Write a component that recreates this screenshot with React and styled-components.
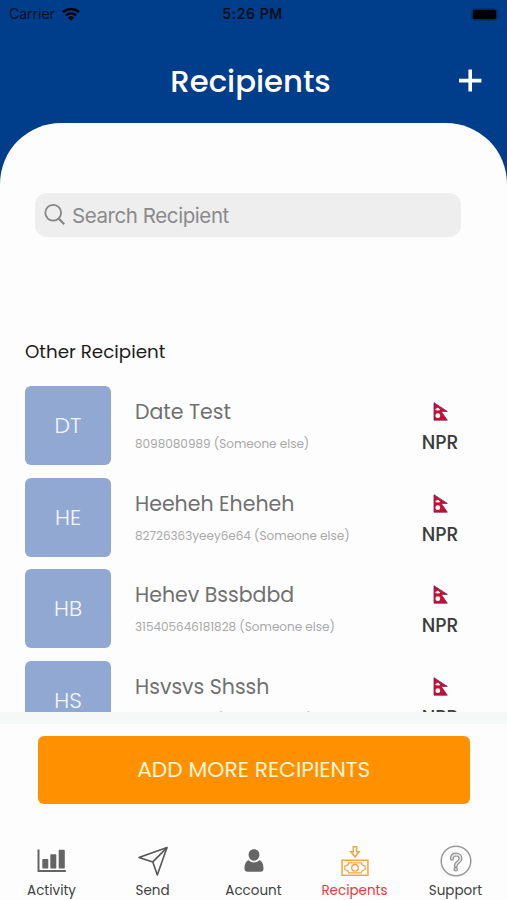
import React from 'react';
import styled, { createGlobalStyle } from 'styled-components';

const GlobalStyle = createGlobalStyle`
  *, *::before, *::after { box-sizing: border-box; }
  body { margin: 0; background: #fdfdfd; font-family: Poppins, Inter, sans-serif; }
  button, input { font: inherit; border: 0; padding: 0; margin: 0; background: none; }
  svg { display: block; flex: none; }
`;

const Screen = styled.div`
  width: 507px;
  height: 900px;
  display: flex;
  flex-direction: column;
  overflow: hidden;
  background: #003d8b;
`;

const StatusBar = styled.div`
  flex: none;
  height: 27px;
  padding: 0 11px 0 9px;
  display: grid;
  grid-template-columns: 1fr auto 1fr;
  align-items: center;
  color: #06101f;
  font-family: Inter, sans-serif;
  font-size: 14px;
  line-height: 28px;
`;

const Carrier = styled.div`
  display: flex;
  align-items: center;
  gap: 7px;
`;

const Clock = styled.div`
  font-weight: 600;
  letter-spacing: 0.6px;
`;

const Battery = styled.div`
  justify-self: end;
  width: 23px;
  height: 9px;
  border-radius: 2px;
  background: #000;
  box-shadow: 0 0 0 1.5px #02295f;
`;

const Header = styled.header`
  flex: none;
  height: 96px;
  padding: 0 25px 0 19px;
  display: grid;
  grid-template-columns: 24px 1fr 24px;
  align-items: start;
`;

const Title = styled.h1`
  margin: 34px 0 0;
  text-align: center;
  color: #fff;
  font-size: 30.7px;
  font-weight: 500;
  line-height: 41px;
`;

const AddButton = styled.button`
  margin-top: 42px;
  color: #fff;
`;

const Panel = styled.main`
  flex: 1;
  min-height: 0;
  display: flex;
  flex-direction: column;
  border-radius: 61px 61px 0 0;
  background: #fdfdfd;
`;

const SearchField = styled.label`
  flex: none;
  height: 44px;
  margin: 70px 46px 0 35px;
  padding-left: 9px;
  display: flex;
  align-items: center;
  gap: 6px;
  border-radius: 12px;
  background: #eeeeee;
  color: #8a8a8c;
`;

const SearchInput = styled.input`
  flex: 1;
  height: 44px;
  outline: none;
  font-family: Inter, sans-serif;
  font-size: 20.5px;
  letter-spacing: -0.42px;
  &::placeholder { color: #8a8a8c; opacity: 1; }
`;

const SectionTitle = styled.h2`
  flex: none;
  margin: 102px 0 0 25px;
  color: #1c1c1c;
  font-size: 18.3px;
  font-weight: 400;
  line-height: 26px;
`;

const List = styled.ul`
  flex: none;
  height: 326px;
  margin: 21px 0 0;
  padding: 0 0 0 25px;
  list-style: none;
  overflow: hidden;
`;

const Row = styled.li`
  height: 79px;
  margin-bottom: 12.6px;
  display: flex;
`;

const Avatar = styled.div`
  flex: none;
  width: 86px;
  height: 79px;
  border-radius: 6px;
  background: #91a8d3;
  color: #f4f7fd;
  text-align: center;
  font-size: 22px;
  font-weight: 300;
  line-height: 80px;
`;

const Details = styled.div`
  flex: 1;
  padding: 12px 0 0 24px;
`;

const Name = styled.div`
  color: #707070;
  font-size: 20.5px;
  font-weight: 400;
  line-height: 28px;
`;

const Reference = styled.div`
  margin-top: 8px;
  color: #a9a9a9;
  font-size: 12px;
  line-height: 20px;
`;

const Currency = styled.div`
  flex: none;
  width: 40px;
  margin-right: 47px;
  padding-top: 16px;
  display: flex;
  flex-direction: column;
  align-items: center;
  color: #3c3c3c;
  font-size: 18.8px;
  font-weight: 500;
  line-height: 20px;
`;

const FlagSlot = styled.div`
  height: 31px;
  padding-left: 2px;
`;

const Divider = styled.div`
  flex: none;
  height: 12px;
  background: #f6f7f7;
`;

const PrimaryButton = styled.button`
  flex: none;
  height: 68px;
  margin: 12px 37px 0 37.5px;
  border-radius: 6px;
  background: #ff9000;
  color: #fff4d6;
  text-align: center;
  font-size: 21.8px;
  font-weight: 400;
  line-height: 68px;
`;

const TabBar = styled.nav`
  flex: 1;
  display: grid;
  grid-template-columns: repeat(5, 101px);
  padding: 41px 0 0 1px;
`;

const Tab = styled.a`
  display: flex;
  flex-direction: column;
  align-items: center;
  color: ${(p) => (p.$active ? '#e23b3b' : '#414141')};
  font-size: 13.5px;
  line-height: 20px;
`;

const TabIcon = styled.span`
  height: 36px;
`;

const WifiIcon = () => (
  <svg width="18" height="14" viewBox="0 0 18 14" fill="none" stroke="#000">
    <path d="M1 5.1a11.6 11.6 0 0 1 16 0" strokeWidth="2.5" />
    <path d="M4 8.3a7.3 7.3 0 0 1 10 0" strokeWidth="2.3" />
    <path d="M9 13.8 6 10.8a4.3 4.3 0 0 1 6 0Z" fill="#000" stroke="none" />
  </svg>
);

const PlusIcon = () => (
  <svg width="24" height="24" viewBox="0 0 24 24" stroke="#fff" strokeWidth="3.6">
    <path d="M12.2 .6v22M1 11.6h22.4" />
  </svg>
);

const SearchIcon = () => (
  <svg width="22" height="22" viewBox="0 0 22 22" fill="none" stroke="#858587" strokeWidth="1.8">
    <circle cx="9.2" cy="8.8" r="7.9" />
    <path d="m14.6 14.4 5.6 5.8" strokeWidth="2.2" />
  </svg>
);

const NepalFlag = () => (
  <svg width="16" height="19" viewBox="0 0 16 19">
    <path d="M1 .7 14.3 9.4H8.2l6.1 8.8H1Z" fill="#c9102b" stroke="#76206c" strokeWidth=".8" />
    <path d="M2.2 6.5q2.5 2.8 5 0l-.3 1.8H2.7Z" fill="#fff" />
    <circle cx="4.7" cy="7.1" r="1.4" fill="#fff" />
    <circle cx="4.8" cy="13.7" r="2.4" fill="#fff" />
  </svg>
);

const ActivityIcon = () => (
  <svg width="30" height="32" viewBox="0 0 30 32" fill="#656565">
    <path d="M.5 4.5h2v20.6h26.4v2H.5Z" />
    <rect x="5.3" y="14" width="6" height="9.5" rx=".7" />
    <rect x="13.3" y="9.2" width="6" height="14.3" rx=".7" />
    <rect x="21.7" y="4.7" width="6.1" height="18.8" rx=".7" />
  </svg>
);

const SendIcon = () => (
  <svg width="30" height="32" viewBox="0 0 30 32" fill="none" stroke="#555" strokeWidth="1.6" strokeLinejoin="round">
    <path d="M29 2.6 1 12.5l13.8 4.4L19.3 30 29 2.6Z" />
    <path d="M29 2.6 14.8 16.9" />
  </svg>
);

const AccountIcon = () => (
  <svg width="22" height="32" viewBox="0 0 22 32" fill="#656565">
    <path d="M11 4.3c3.2 0 5.4 2.4 5.4 5.4 0 3.2-2.4 6-5.4 6s-5.4-2.8-5.4-6c0-3 2.2-5.4 5.4-5.4Z" />
    <path d="M5.8 15.2c3 2.9 7.4 2.9 10.4 0 2.8.7 4.3 3.8 4.3 8.6 0 1.8-1 3-3 3h-13c-2 0-3-1.2-3-3 0-4.8 1.5-7.9 4.3-8.6Z" />
  </svg>
);

const RecipientsIcon = () => (
  <svg width="28" height="32" viewBox="0 0 28 32" fill="none" stroke="#f4a545" strokeWidth="1.5">
    <path d="M12.3 1.8h3.4v5h2.4L14 12 9.9 6.8h2.4Z" />
    <path d="M1.1 15.3h25.8v15H1.1Z" />
    <path d="M7.8 17.8h12.4q.6 2.7 4 3.3v3.4q-3.4.6-4 3.3H7.8q-.6-2.7-4-3.3v-3.4q3.4-.6 4-3.3Z" strokeWidth="1.2" />
    <circle cx="14" cy="22.8" r="3.3" strokeWidth="1.4" />
  </svg>
);

const SupportIcon = () => (
  <svg width="32" height="32" viewBox="0 0 32 32" fill="none">
    <circle cx="16" cy="16" r="14.8" stroke="#999" strokeWidth="1.5" />
    <path d="M11.9 13.7c.2-2.7 1.9-4.1 4.2-4.1 2.6 0 4.4 1.5 4.4 3.9 0 3.9-4.7 3.4-4.7 7.2" stroke="#8f8f8f" strokeWidth="4" strokeLinecap="round" />
    <path d="M11.9 13.7c.2-2.7 1.9-4.1 4.2-4.1 2.6 0 4.4 1.5 4.4 3.9 0 3.9-4.7 3.4-4.7 7.2" stroke="#e4e4e4" strokeWidth="1.6" strokeLinecap="round" />
    <circle cx="15.7" cy="24.3" r="1.7" fill="#ddd" stroke="#8f8f8f" strokeWidth="1.2" />
  </svg>
);

const recipients = [
  { initials: 'DT', name: 'Date Test', reference: '8098080989 (Someone else)' },
  { initials: 'HE', name: 'Heeheh Eheheh', reference: '82726363yeey6e64 (Someone else)' },
  { initials: 'HB', name: 'Hehev Bssbdbd', reference: '315405646181828 (Someone else)' },
  { initials: 'HS', name: 'Hsvsvs Shssh', reference: '82540564618 (Someone else)' },
];

const tabs = [
  { label: 'Activity', Icon: ActivityIcon },
  { label: 'Send', Icon: SendIcon },
  { label: 'Account', Icon: AccountIcon },
  { label: 'Recipents', Icon: RecipientsIcon, active: true },
  { label: 'Support', Icon: SupportIcon },
];

export default function App() {
  return (
    <Screen>
      <GlobalStyle />
      <StatusBar>
        <Carrier>Carrier <WifiIcon /></Carrier>
        <Clock>5:26 PM</Clock>
        <Battery />
      </StatusBar>
      <Header>
        <span />
        <Title>Recipients</Title>
        <AddButton aria-label="Add"><PlusIcon /></AddButton>
      </Header>
      <Panel>
        <SearchField>
          <SearchIcon />
          <SearchInput placeholder="Search Recipient" />
        </SearchField>
        <SectionTitle>Other Recipient</SectionTitle>
        <List>
          {recipients.map((r) => (
            <Row key={r.initials}>
              <Avatar>{r.initials}</Avatar>
              <Details>
                <Name>{r.name}</Name>
                <Reference>{r.reference}</Reference>
              </Details>
              <Currency>
                <FlagSlot><NepalFlag /></FlagSlot>
                NPR
              </Currency>
            </Row>
          ))}
        </List>
        <Divider />
        <PrimaryButton>ADD MORE RECIPIENTS</PrimaryButton>
        <TabBar>
          {tabs.map(({ label, Icon, active }) => (
            <Tab key={label} $active={active}>
              <TabIcon><Icon /></TabIcon>
              {label}
            </Tab>
          ))}
        </TabBar>
      </Panel>
    </Screen>
  );
}
